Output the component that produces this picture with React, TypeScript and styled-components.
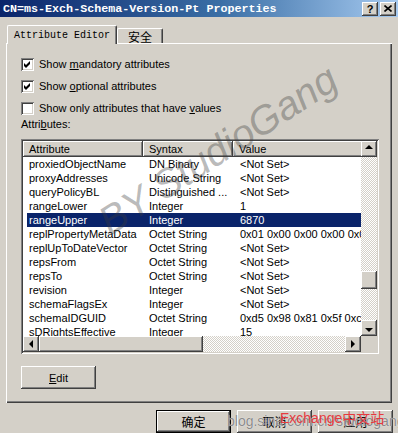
import React from 'react';
import styled, { createGlobalStyle, css } from 'styled-components';

const GlobalStyle = createGlobalStyle`
  html, body {
    margin: 0;
    padding: 0;
  }
  body {
    width: 398px;
    height: 433px;
    overflow: hidden;
    background: #d4d0c8;
    font-family: "Liberation Sans", Arial, sans-serif;
    font-size: 11px;
    color: #000000;
  }
`;

const raised = css`
  background: #d4d0c8;
  box-shadow: inset -1px -1px #404040, inset 1px 1px #ffffff,
    inset -2px -2px #808080, inset 2px 2px #d4d0c8;
`;

const sunken = css`
  box-shadow: inset 1px 1px #808080, inset -1px -1px #ffffff,
    inset 2px 2px #404040, inset -2px -2px #d4d0c8;
`;

const dither = css`
  background-color: #ffffff;
  background-image: repeating-conic-gradient(#d4d0c8 0% 25%, #ffffff 0% 50%);
  background-size: 2px 2px;
`;

type Attr = { name: string; syntax: string; value: string; selected?: boolean };

const rows: Attr[] = [
  { name: 'proxiedObjectName', syntax: 'DN Binary', value: '<Not Set>' },
  { name: 'proxyAddresses', syntax: 'Unicode String', value: '<Not Set>' },
  { name: 'queryPolicyBL', syntax: 'Distinguished ...', value: '<Not Set>' },
  { name: 'rangeLower', syntax: 'Integer', value: '1' },
  { name: 'rangeUpper', syntax: 'Integer', value: '6870', selected: true },
  { name: 'replPropertyMetaData', syntax: 'Octet String', value: '0x01 0x00 0x00 0x00 0x00 0x00' },
  { name: 'replUpToDateVector', syntax: 'Octet String', value: '<Not Set>' },
  { name: 'repsFrom', syntax: 'Octet String', value: '<Not Set>' },
  { name: 'repsTo', syntax: 'Octet String', value: '<Not Set>' },
  { name: 'revision', syntax: 'Integer', value: '<Not Set>' },
  { name: 'schemaFlagsEx', syntax: 'Integer', value: '<Not Set>' },
  { name: 'schemaIDGUID', syntax: 'Octet String', value: '0xd5 0x98 0x81 0x5f 0xc9 0x1a' },
  { name: 'sDRightsEffective', syntax: 'Integer', value: '15' },
];

const Arrow = ({ dir }: { dir: 'up' | 'down' | 'left' | 'right' }) => {
  const pts = {
    up: '4,6 8,2 12,6',
    down: '4,6 8,10 12,6',
    left: '10,2 6,6 10,10',
    right: '6,2 10,6 6,10',
  }[dir];
  return (
    <svg width="16" height="12" viewBox="0 0 16 12">
      <polygon points={pts} fill="#000000" />
    </svg>
  );
};

const Check = () => (
  <svg width="13" height="13" viewBox="0 0 13 13">
    <polygon points="3,5 5,7 9,3 9,6 5,10 3,8" fill="#000000" />
  </svg>
);

const CheckOption = ({ checked, children }: { checked?: boolean; children: React.ReactNode }) => (
  <CheckRow>
    <CheckBox>{checked && <Check />}</CheckBox>
    <span>{children}</span>
  </CheckRow>
);

const App: React.FC = () => {
  return (
    <Window>
      <GlobalStyle />
      <TitleBar>
        <TitleText>CN=ms-Exch-Schema-Version-Pt Properties</TitleText>
        <TitleButtons>
          <CaptionButton>?</CaptionButton>
          <CaptionButton>
            <svg width="8" height="7" viewBox="0 0 8 7">
              <path d="M0.5 0.5 L7.5 6.5 M7.5 0.5 L0.5 6.5" stroke="#000" strokeWidth="1.6" />
            </svg>
          </CaptionButton>
        </TitleButtons>
      </TitleBar>

      <Body>
        <TabStrip>
          <Tab $active>Attribute Editor</Tab>
          <Tab>安全</Tab>
        </TabStrip>

        <Panel>
          <CheckList>
            <CheckOption checked>
              Show <u>m</u>andatory attributes
            </CheckOption>
            <CheckOption checked>
              Show <u>o</u>ptional attributes
            </CheckOption>
            <CheckOption>
              Show only attributes that have <u>v</u>alues
            </CheckOption>
          </CheckList>

          <FieldLabel>
            Attri<u>b</u>utes:
          </FieldLabel>

          <ListFrame>
            <ListContent>
              <HeaderRow>
                <HeaderCell $width={120}>Attribute</HeaderCell>
                <HeaderCell $width={90}>Syntax</HeaderCell>
                <HeaderCell $width={140}>Value</HeaderCell>
              </HeaderRow>
              {rows.map((r) => (
                <Row key={r.name} $selected={r.selected}>
                  <Cell $pad={2}>{r.name}</Cell>
                  <Cell $pad={6}>{r.syntax}</Cell>
                  <Cell $pad={7}>{r.value}</Cell>
                </Row>
              ))}
            </ListContent>

            <VScroll>
              <ScrollButton>
                <Arrow dir="up" />
              </ScrollButton>
              <Trough style={{ height: 114 }} />
              <Thumb $size={18} />
              <Trough style={{ flex: 1 }} />
              <ScrollButton>
                <Arrow dir="down" />
              </ScrollButton>
            </VScroll>

            <HScroll>
              <ScrollButton>
                <Arrow dir="left" />
              </ScrollButton>
              <Thumb $size={164} />
              <Trough style={{ flex: 1 }} />
              <ScrollButton>
                <Arrow dir="right" />
              </ScrollButton>
            </HScroll>
            <Corner />
          </ListFrame>

          <PushButton $width={75}>
            <u>E</u>dit
          </PushButton>
        </Panel>

        <ButtonRow>
          <DialogButton $default>确定</DialogButton>
          <DialogButton>取消</DialogButton>
          <DialogButton>应用</DialogButton>
        </ButtonRow>
      </Body>

      <Watermark>BY StudioGang</Watermark>
      <BlogMark>blog.sina.com.cn/studiogang</BlogMark>
      <SiteMark>Exchange中文站</SiteMark>
    </Window>
  );
};

export default App;

const Window = styled.div`
  position: relative;
  display: flex;
  flex-direction: column;
  width: 398px;
  height: 433px;
  overflow: hidden;
`;

const TitleBar = styled.div`
  display: flex;
  align-items: center;
  justify-content: space-between;
  height: 18px;
  padding: 0 2px 0 3px;
  background: linear-gradient(to right, #0a246a 0%, #3a6ea5 55%, #a6caf0 100%);
`;

const TitleText = styled.span`
  font-family: "Liberation Mono", "Courier New", monospace;
  font-weight: bold;
  font-size: 11.7px;
  color: #ffffff;
  white-space: nowrap;
`;

const TitleButtons = styled.div`
  display: flex;
  gap: 2px;
`;

const CaptionButton = styled.div`
  ${raised};
  display: flex;
  align-items: center;
  justify-content: center;
  width: 16px;
  height: 14px;
  font-family: "Liberation Sans", Arial, sans-serif;
  font-weight: bold;
  font-size: 11px;
`;

const Body = styled.div`
  display: flex;
  flex-direction: column;
  padding: 8px 6px 0 6px;
`;

const TabStrip = styled.div`
  display: flex;
  align-items: flex-end;
  height: 18px;
  padding-left: 1px;
  position: relative;
  z-index: 1;
`;

const Tab = styled.div<{ $active?: boolean }>`
  display: flex;
  align-items: center;
  justify-content: center;
  box-sizing: border-box;
  width: ${(p) => (p.$active ? 110 : 46)}px;
  height: ${(p) => (p.$active ? 19 : 15)}px;
  margin-bottom: ${(p) => (p.$active ? -1 : 0)}px;
  padding-top: ${(p) => (p.$active ? 0 : 1)}px;
  background: #d4d0c8;
  border-top: 1px solid #ffffff;
  border-left: 1px solid #ffffff;
  border-right: 1px solid #404040;
  border-radius: 2px 2px 0 0;
  box-shadow: inset -1px 0 #808080;
  font-family: ${(p) =>
    p.$active
      ? '"Liberation Mono", "Courier New", monospace'
      : '"Noto Sans CJK SC", sans-serif'};
  font-size: ${(p) => (p.$active ? 10 : 12)}px;
  white-space: nowrap;
`;

const Panel = styled.div`
  display: flex;
  flex-direction: column;
  align-items: flex-start;
  box-sizing: border-box;
  width: 386px;
  height: 360px;
  padding: 15px 0 0 15px;
  background: #d4d0c8;
  box-shadow: inset 1px 1px #ffffff, inset -1px -1px #404040, inset -2px -2px #808080;
`;

const CheckList = styled.div`
  display: flex;
  flex-direction: column;
  gap: 9px;
`;

const CheckRow = styled.label`
  display: flex;
  align-items: center;
  gap: 5px;
  height: 13px;
  line-height: 13px;
  white-space: nowrap;
`;

const CheckBox = styled.span`
  ${sunken};
  display: block;
  width: 13px;
  height: 13px;
  background-color: #ffffff;
  flex-shrink: 0;
`;

const FieldLabel = styled.div`
  margin-top: 2px;
  line-height: 14px;
`;

const ListFrame = styled.div`
  ${sunken};
  display: grid;
  grid-template-columns: 338px 16px;
  grid-template-rows: 195px 16px;
  box-sizing: border-box;
  width: 358px;
  height: 215px;
  margin-top: 8px;
  padding: 2px;
  background: #ffffff;
`;

const ListContent = styled.div`
  overflow: hidden;
  background: #ffffff;
`;

const HeaderRow = styled.div`
  display: flex;
  height: 16px;
`;

const HeaderCell = styled.div<{ $width: number }>`
  ${raised};
  box-sizing: border-box;
  flex: 0 0 ${(p) => p.$width}px;
  padding-left: 6px;
  line-height: 16px;
  white-space: nowrap;
`;

const Row = styled.div<{ $selected?: boolean }>`
  display: grid;
  grid-template-columns: 116px 90px 1fr;
  height: 14px;
  line-height: 14px;
  margin-left: 4px;
  background: ${(p) => (p.$selected ? '#0a246a' : 'transparent')};
  color: ${(p) => (p.$selected ? '#ffffff' : '#000000')};
`;

const Cell = styled.div<{ $pad: number }>`
  padding-left: ${(p) => p.$pad}px;
  white-space: nowrap;
  overflow: hidden;
`;

const VScroll = styled.div`
  display: flex;
  flex-direction: column;
`;

const HScroll = styled.div`
  display: flex;
`;

const ScrollButton = styled.div`
  ${raised};
  display: flex;
  align-items: center;
  justify-content: center;
  flex: 0 0 16px;
  width: 16px;
  height: 16px;
`;

const Trough = styled.div`
  ${dither};
`;

const Thumb = styled.div<{ $size: number }>`
  ${raised};
  flex: 0 0 ${(p) => p.$size}px;
`;

const Corner = styled.div`
  background: #d4d0c8;
`;

const PushButton = styled.div<{ $width: number }>`
  ${raised};
  display: flex;
  align-items: center;
  justify-content: center;
  width: ${(p) => p.$width}px;
  height: 23px;
  margin-top: 12px;
`;

const ButtonRow = styled.div`
  display: flex;
  justify-content: flex-end;
  gap: 6px;
  margin-top: 7px;
  margin-right: -1px;
`;

const DialogButton = styled.div<{ $default?: boolean }>`
  display: flex;
  align-items: center;
  justify-content: center;
  box-sizing: border-box;
  width: 75px;
  height: 23px;
  background: #d4d0c8;
  font-family: "Noto Sans CJK SC", sans-serif;
  font-size: 12px;
  box-shadow: ${(p) =>
    p.$default
      ? 'inset 1px 1px #000, inset -1px -1px #000, inset -2px -2px #404040, inset 2px 2px #ffffff, inset -3px -3px #808080'
      : 'inset -1px -1px #404040, inset 1px 1px #ffffff, inset -2px -2px #808080'};
`;

const Watermark = styled.div`
  position: absolute;
  left: 218px;
  top: 150px;
  transform: translate(-50%, -50%) rotate(-33deg);
  font-family: "Liberation Sans", Arial, sans-serif;
  font-style: italic;
  font-size: 40px;
  color: rgba(60, 60, 60, 0.36);
  white-space: nowrap;
  pointer-events: none;
`;

const BlogMark = styled.div`
  position: absolute;
  left: 227px;
  top: 413px;
  font-family: "Liberation Sans", Arial, sans-serif;
  font-size: 14px;
  color: #8a8a8a;
  text-shadow: 0 0 1px #ffffff;
  white-space: nowrap;
  pointer-events: none;
`;

const SiteMark = styled.div`
  position: absolute;
  left: 280px;
  top: 407px;
  font-family: "Liberation Sans", "Noto Sans CJK SC", sans-serif;
  font-size: 14px;
  color: #e63a3f;
  white-space: nowrap;
  pointer-events: none;
`;
